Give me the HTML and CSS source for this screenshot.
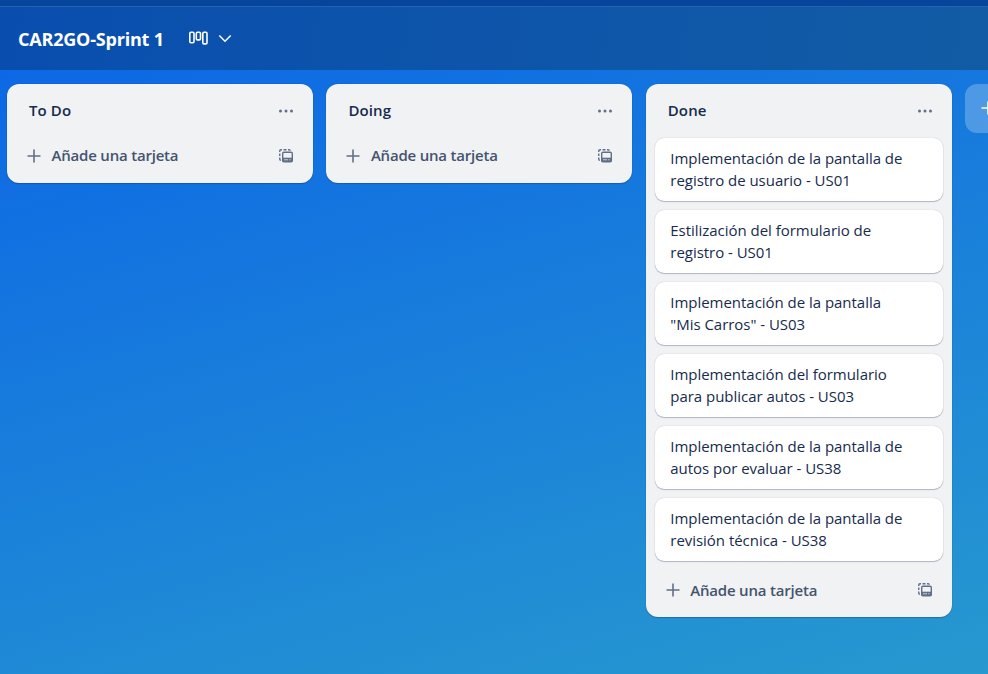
FILE: index.html
```
<!DOCTYPE html>
<html lang="es">
<head>
<meta charset="utf-8">
<title>CAR2GO-Sprint 1</title>
<link rel="stylesheet" href="styles.css">
</head>
<body>
<svg width="0" height="0" class="defs" aria-hidden="true">
  <symbol id="plus" viewBox="0 0 16 16"><path d="M8 1.5v13M1.5 8h13" fill="none" stroke="currentColor" stroke-width="1.6"/></symbol>
  <symbol id="dots" viewBox="0 0 16 16"><circle cx="2.5" cy="8" r="1.5"/><circle cx="8" cy="8" r="1.5"/><circle cx="13.5" cy="8" r="1.5"/></symbol>
  <symbol id="template" viewBox="0 0 16 16"><g fill="none" stroke="currentColor" stroke-width="1.4"><path d="M1.75 4V3q0-1.25 1.25-1.25h1M5.5 1.75h3M10 1.75h1.2q1 0 1 .9M1.75 5.5V8M1.75 9.5v1.7q0 1 1.2 1"/><rect x="4.7" y="4.2" width="9.6" height="9.6" rx="1.2"/></g><path d="M4.5 9.7h10v4h-10z"/><path d="M6 11.3h4v1H6zM11.2 11.3h1.4v1h-1.4z" fill="#c3c9d3"/></symbol>
</svg>
<div class="topbar"></div>
<header class="header">
  <h1>CAR2GO-Sprint 1</h1>
  <svg class="view" viewBox="0 0 20 16" fill="none" stroke="currentColor" stroke-width="1.6"><rect x=".8" y="2.3" width="4.2" height="10.4" rx="1.2"/><rect x="7.3" y="2.3" width="4.2" height="7.6" rx="1.2"/><rect x="13.8" y="2.3" width="4.2" height="11.6" rx="1.2"/></svg>
  <svg class="chevron" viewBox="0 0 14 10" fill="none" stroke="currentColor" stroke-width="1.5"><path d="M1.3 1.5 7 7.2l5.7-5.7"/></svg>
</header>
<main class="board">
  <section class="list">
    <div class="list-head"><h2>To Do</h2><svg class="icon"><use href="#dots"/></svg></div>
    <div class="add"><svg class="icon"><use href="#plus"/></svg><span>Añade una tarjeta</span><svg class="icon"><use href="#template"/></svg></div>
  </section>
  <section class="list">
    <div class="list-head"><h2>Doing</h2><svg class="icon"><use href="#dots"/></svg></div>
    <div class="add"><svg class="icon"><use href="#plus"/></svg><span>Añade una tarjeta</span><svg class="icon"><use href="#template"/></svg></div>
  </section>
  <section class="list">
    <div class="list-head"><h2>Done</h2><svg class="icon"><use href="#dots"/></svg></div>
    <div class="cards">
      <article class="card">Implementación de la pantalla de<br>registro de usuario - US01</article>
      <article class="card">Estilización del formulario de<br>registro - US01</article>
      <article class="card">Implementación de la pantalla<br>"Mis Carros" - US03</article>
      <article class="card">Implementación del formulario<br>para publicar autos - US03</article>
      <article class="card">Implementación de la pantalla de<br>autos por evaluar - US38</article>
      <article class="card">Implementación de la pantalla de<br>revisión técnica - US38</article>
    </div>
    <div class="add"><svg class="icon"><use href="#plus"/></svg><span>Añade una tarjeta</span><svg class="icon"><use href="#template"/></svg></div>
  </section>
  <div class="new-list"><svg class="icon"><use href="#plus"/></svg></div>
</main>
</body>
</html>
```
FILE: styles.css
```
* { box-sizing: border-box; }
body {
  margin: 0;
  height: 674px;
  overflow: hidden;
  display: flex;
  flex-direction: column;
  font-family: "Open Sans", "Noto Sans", sans-serif;
  font-size: 15px;
  line-height: 22px;
  color: #172b4d;
}
.defs { position: absolute; }
svg { flex: none; display: block; }
.topbar {
  height: 7px;
  flex: none;
  background: #05469c;
  border-bottom: 1px solid #2c60ae;
}
.header {
  height: 63px;
  flex: none;
  display: flex;
  align-items: center;
  padding: 1px 18px 0;
  color: #fff;
  background: linear-gradient(100deg, #094eaf, #125ca5);
}
h1 {
  margin: 0;
  width: 171px;
  font-size: 18px;
  line-height: 24px;
  font-weight: 700;
  letter-spacing: -0.2px;
  white-space: nowrap;
}
.view { width: 20px; height: 16px; margin-bottom: 3px; }
.chevron { width: 14px; height: 10px; margin-left: 9px; }
.board {
  flex: 1;
  display: flex;
  align-items: flex-start;
  gap: 13.4px;
  padding: 14px 0 0 7px;
  background: linear-gradient(164deg, #0d68e5, #2799cf);
}
.list {
  width: 306px;
  flex: none;
  padding: 8px 8px 9px;
  border-radius: 12px;
  background: #f1f2f4;
  box-shadow: 0 1px 1px #091e4240, 0 0 1px #091e4250;
}
.list-head {
  height: 37px;
  display: flex;
  align-items: center;
  justify-content: space-between;
  padding: 0 11px 0 14px;
}
h2 {
  margin: 0 0 2px;
  font-size: 15px;
  line-height: 22px;
  font-weight: 600;
  letter-spacing: 0.1px;
}
.icon { width: 16px; height: 16px; color: #626f86; fill: currentColor; }
.cards {
  display: flex;
  flex-direction: column;
  gap: 9px;
  padding: 9px 1px 0;
}
.card {
  height: 63px;
  padding: 9px 15px 10px 15.5px;
  border-radius: 9px;
  background: #fff;
  box-shadow: 0 1px 1px #091e4240, 0 0 1px #091e4250;
  letter-spacing: -0.03px;
  white-space: nowrap;
}
.add {
  height: 37px;
  display: flex;
  align-items: center;
  margin-top: 8px;
  padding: 0 11px;
  color: #44546f;
  font-weight: 600;
  letter-spacing: -0.2px;
}
.cards + .add { margin-top: 10px; }
.add span { flex: 1; margin: 0 0 2px 9.5px; }
.cards + .add span { margin-bottom: 0; }
.new-list {
  flex: 1;
  min-width: 0;
  height: 49px;
  overflow: hidden;
  padding: 16px 0 0 15px;
  border-radius: 12px 0 0 12px;
  background: #ffffff3d;
}
.new-list .icon { color: #fff; }
```
